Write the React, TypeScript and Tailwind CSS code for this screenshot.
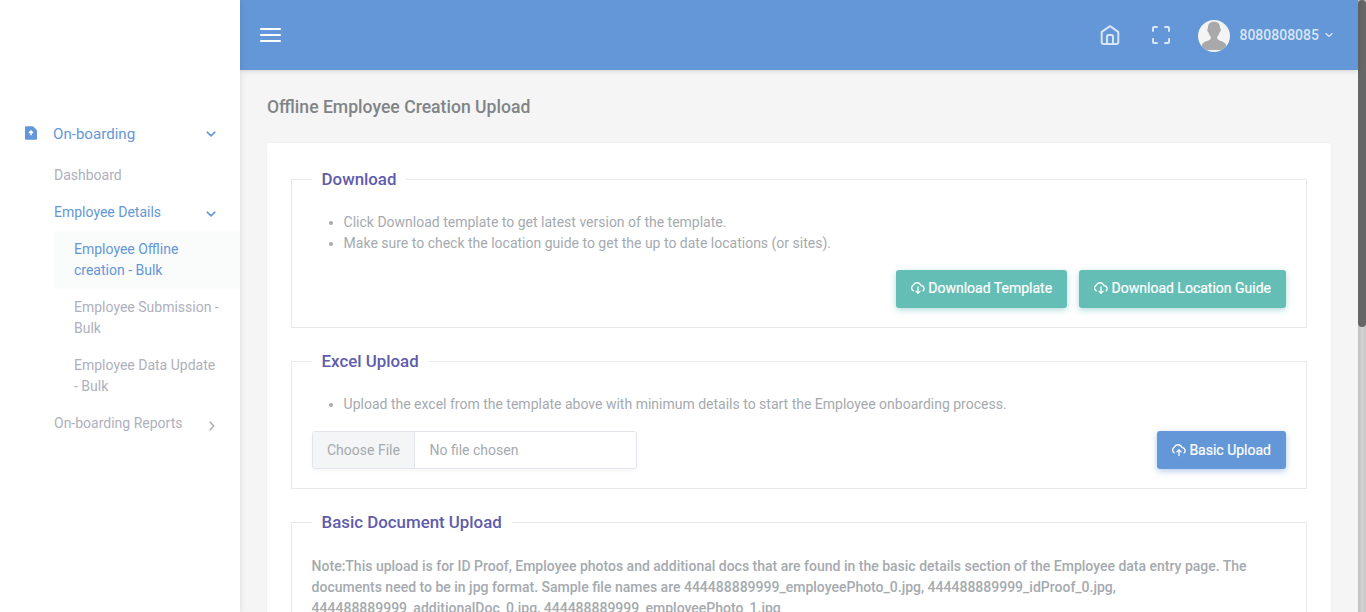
import React, { type ReactNode } from 'react';

function Chevron({ className = '' }: { className?: string }) {
  return (
    <svg viewBox="0 0 10 10" className={className} fill="none" stroke="currentColor" strokeWidth="1.6" strokeLinecap="round" strokeLinejoin="round">
      <path d="M1.2 3.2 5 6.8 8.8 3.2" />
    </svg>
  );
}

function Cloud({ up = false }: { up?: boolean }) {
  return (
    <svg viewBox="0 0 14 14" className="mr-[3.5px] h-3.5 w-3.5 shrink-0" fill="none" stroke="currentColor" strokeWidth="1.3" strokeLinecap="round" strokeLinejoin="round">
      <path d="M2.2 9.8A3.3 3.3 0 0 1 2.2 4.2A4.2 4.2 0 0 1 10 4.6A3 3 0 0 1 12 9.9" />
      {up ? <path d="M7 12.6V7M4.9 8.9 7 6.8 9.1 8.9" /> : <path d="M7 6V12M4.9 10.1 7 12.2 9.1 10.1" />}
    </svg>
  );
}

function Button({ children, up = false, color }: { children: ReactNode; up?: boolean; color: string }) {
  return (
    <button className={`flex h-[38px] items-center rounded-[3px] px-[15px] text-sm whitespace-nowrap text-white ${up ? 'pb-0' : 'pb-0.5'} ${color}`}>
      <Cloud up={up} />
      <span className="[-webkit-text-stroke:0.2px_white]">{children}</span>
    </button>
  );
}

function Section({ title, className, children }: { title: string; className: string; children: ReactNode }) {
  return (
    <fieldset className={`min-w-0 border border-[#e9e9eb] pr-5 pl-[19.6px] ${className}`}>
      <legend className="px-2.5 text-[16.85px] leading-6 font-medium text-[#605cab]">{title}</legend>
      {children}
    </fieldset>
  );
}

function Sidebar() {
  return (
    <aside className="z-10 w-60 shrink-0 bg-white pt-[124px] text-sm text-[#aeb0be] shadow-[0_0_6px_rgba(0,0,0,0.13)]">
      <div className="flex h-[21px] items-center pr-6 pl-6 text-[15.1px] text-[#6497d8]">
        <svg viewBox="0 0 14 14" className="-mt-[3px] mr-[15px] h-3.5 w-3.5" fill="currentColor">
          <path d="M1 1Q1 .2 1.8 .2H9L13 4.2V13Q13 13.8 12.2 13.8H1.8Q1 13.8 1 13Z" />
          <path d="M7 9.2V5.4M5 7 7 5.1 9 7" stroke="white" strokeWidth="1.5" fill="none" />
        </svg>
        <span className="grow">On-boarding</span>
        <Chevron className="-mt-px h-2.5 w-2.5" />
      </div>
      <nav className="flex flex-col pt-5 pl-[54px] leading-[21px]">
        <a className="h-[37px]">Dashboard</a>
        <a className="flex h-[29px] items-start pr-6 text-[#6497d8]">
          <span className="grow">Employee Details</span>
          <Chevron className="mt-[7px] h-2.5 w-2.5" />
        </a>
        <a className="h-[58px] bg-[#fafbfb] py-2 pr-5 pl-5 text-[#6497d8]">Employee Offline<br />creation - Bulk</a>
        <a className="h-[58px] py-2 pl-5 whitespace-nowrap">Employee Submission -<br />Bulk</a>
        <a className="h-[58px] py-2 pl-5 whitespace-nowrap">Employee Data Update<br />- Bulk</a>
        <a className="flex items-start pt-2 pr-[23px]">
          <span className="grow">On-boarding Reports</span>
          <Chevron className="mt-[7.5px] h-2.5 w-2.5 -rotate-90" />
        </a>
      </nav>
    </aside>
  );
}

function Header() {
  return (
    <header className="z-[5] flex h-[70px] shrink-0 items-center bg-[#6497d8] pr-6 pl-[19.5px] text-[#d8e5f5] shadow-[0_1px_5px_rgba(0,0,0,0.15)]">
      <div className="flex w-[21px] flex-col gap-1">
        <i className="h-0.5 rounded-[1px] bg-white" />
        <i className="h-0.5 rounded-[1px] bg-white" />
        <i className="h-0.5 rounded-[1px] bg-white" />
      </div>
      <div className="grow" />
      <svg viewBox="0 0 20 20" className="h-5 w-5" fill="none" stroke="currentColor" strokeWidth="2" strokeLinejoin="round">
        <path d="M1.7 7.4Q1.7 6.9 2.1 6.6L10 1.2 17.9 6.6Q18.3 6.9 18.3 7.4V17Q18.3 19 16.3 19H3.7Q1.7 19 1.7 17ZM7 19V11.6Q7 10 8.6 10H11.4Q13 10 13 11.6V19" />
      </svg>
      <svg viewBox="0 0 20 20" className="ml-[31px] h-5 w-5" fill="none" stroke="currentColor" strokeWidth="2" strokeLinejoin="round" strokeLinecap="round">
        <path d="M6 2H3Q2 2 2 3V6M14 2H17Q18 2 18 3V6M18 14V17Q18 18 17 18H14M6 18H3Q2 18 2 17V14" />
      </svg>
      <svg viewBox="0 0 32 32" className="mt-0.5 ml-[27px] h-8 w-8 rounded-full bg-[#f4f4f4]" fill="#a9a9a9">
        <path d="M16 1.7C11.5 1.7 10 4 10 8Q9 8 9.3 10.5Q9.6 12 10.5 12.5Q11 15 12.7 16.5V19Q11 20.5 7 21.7Q3.5 23.5 3.5 27V30H28.5V27Q28.5 23.5 25 21.7Q21 20.5 19.3 19V16.5Q21 15 21.5 12.5Q22.5 12 22.8 10.5Q23 8 22 8C22 4 20.5 1.7 16 1.7Z" />
      </svg>
      <span className="ml-[9.8px] text-sm font-medium">8080808085</span>
      <Chevron className="ml-[6px] h-2 w-2" />
      <span className="w-px" />
    </header>
  );
}

export default function App() {
  return (
    <div className="flex h-[612px] w-[1366px] overflow-hidden bg-[#f5f5f5] font-['Roboto',sans-serif] text-sm text-[#a5aaaf]">
      <Sidebar />
      <div className="flex w-[1118px] shrink-0 flex-col">
        <Header />
        <main className="flex flex-col px-[27px] pt-[25px]">
          <h1 className="h-[48px] text-[17.6px] leading-6 font-medium text-[#818486]">Offline Employee Creation Upload</h1>
          <div className="rounded-[3px] bg-white px-6 pt-6 shadow-[0_0_3px_rgba(0,0,0,0.05)]">
            <Section title="Download" className="h-[161px]">
              <ul className="list-disc pt-[21px] pl-8 leading-[21px]">
                <li>Click Download template to get latest version of the template.</li>
                <li>Make sure to check the location guide to get the up to date locations (or sites).</li>
              </ul>
              <div className="mt-4 flex justify-end gap-3">
                <Button color="bg-[#65beb5] shadow-[0_2px_6px_rgba(101,190,181,0.5)]">Download Template</Button>
                <Button color="bg-[#65beb5] shadow-[0_2px_6px_rgba(101,190,181,0.5)]">Download Location Guide</Button>
              </div>
            </Section>
            <Section title="Excel Upload" className="mt-[21px] h-[140px]">
              <ul className="list-disc pt-[21px] pl-8 leading-[21px]">
                <li>Upload the excel from the template above with minimum details to start the Employee onboarding process.</li>
              </ul>
              <div className="mt-4 flex justify-between">
                <div className="flex h-[38px] w-[325px] overflow-hidden rounded-[3px] border border-[#e2e5ec] leading-9 shadow-[0_2px_4px_rgba(0,0,0,0.04)]">
                  <span className="w-[102px] border-r border-[#e2e5ec] bg-[#f3f5f7] pl-[14.4px]">Choose File</span>
                  <span className="pl-[14.9px]">No file chosen</span>
                </div>
                <Button up color="bg-[#6497d8] shadow-[0_2px_6px_rgba(100,151,216,0.5)]">Basic Upload</Button>
              </div>
            </Section>
            <Section title="Basic Document Upload" className="mt-[21px] h-[180px]">
              <p className="pt-[22px] leading-[21px] font-medium whitespace-nowrap">
                Note:This upload is for ID Proof, Employee photos and additional docs that are found in the basic details section of the Employee data entry page. The<br />
                documents need to be in jpg format. Sample file names are 444488889999_employeePhoto_0.jpg, 444488889999_idProof_0.jpg,<br />
                444488889999_additionalDoc_0.jpg, 444488889999_employeePhoto_1.jpg
              </p>
            </Section>
          </div>
        </main>
      </div>
      <div className="w-2 shrink-0 bg-gradient-to-r from-[#c0c0c0] via-[#d2d2d2] to-[#c8c8c8]">
        <div className="h-[327px] rounded bg-[#666]" />
      </div>
    </div>
  );
}
